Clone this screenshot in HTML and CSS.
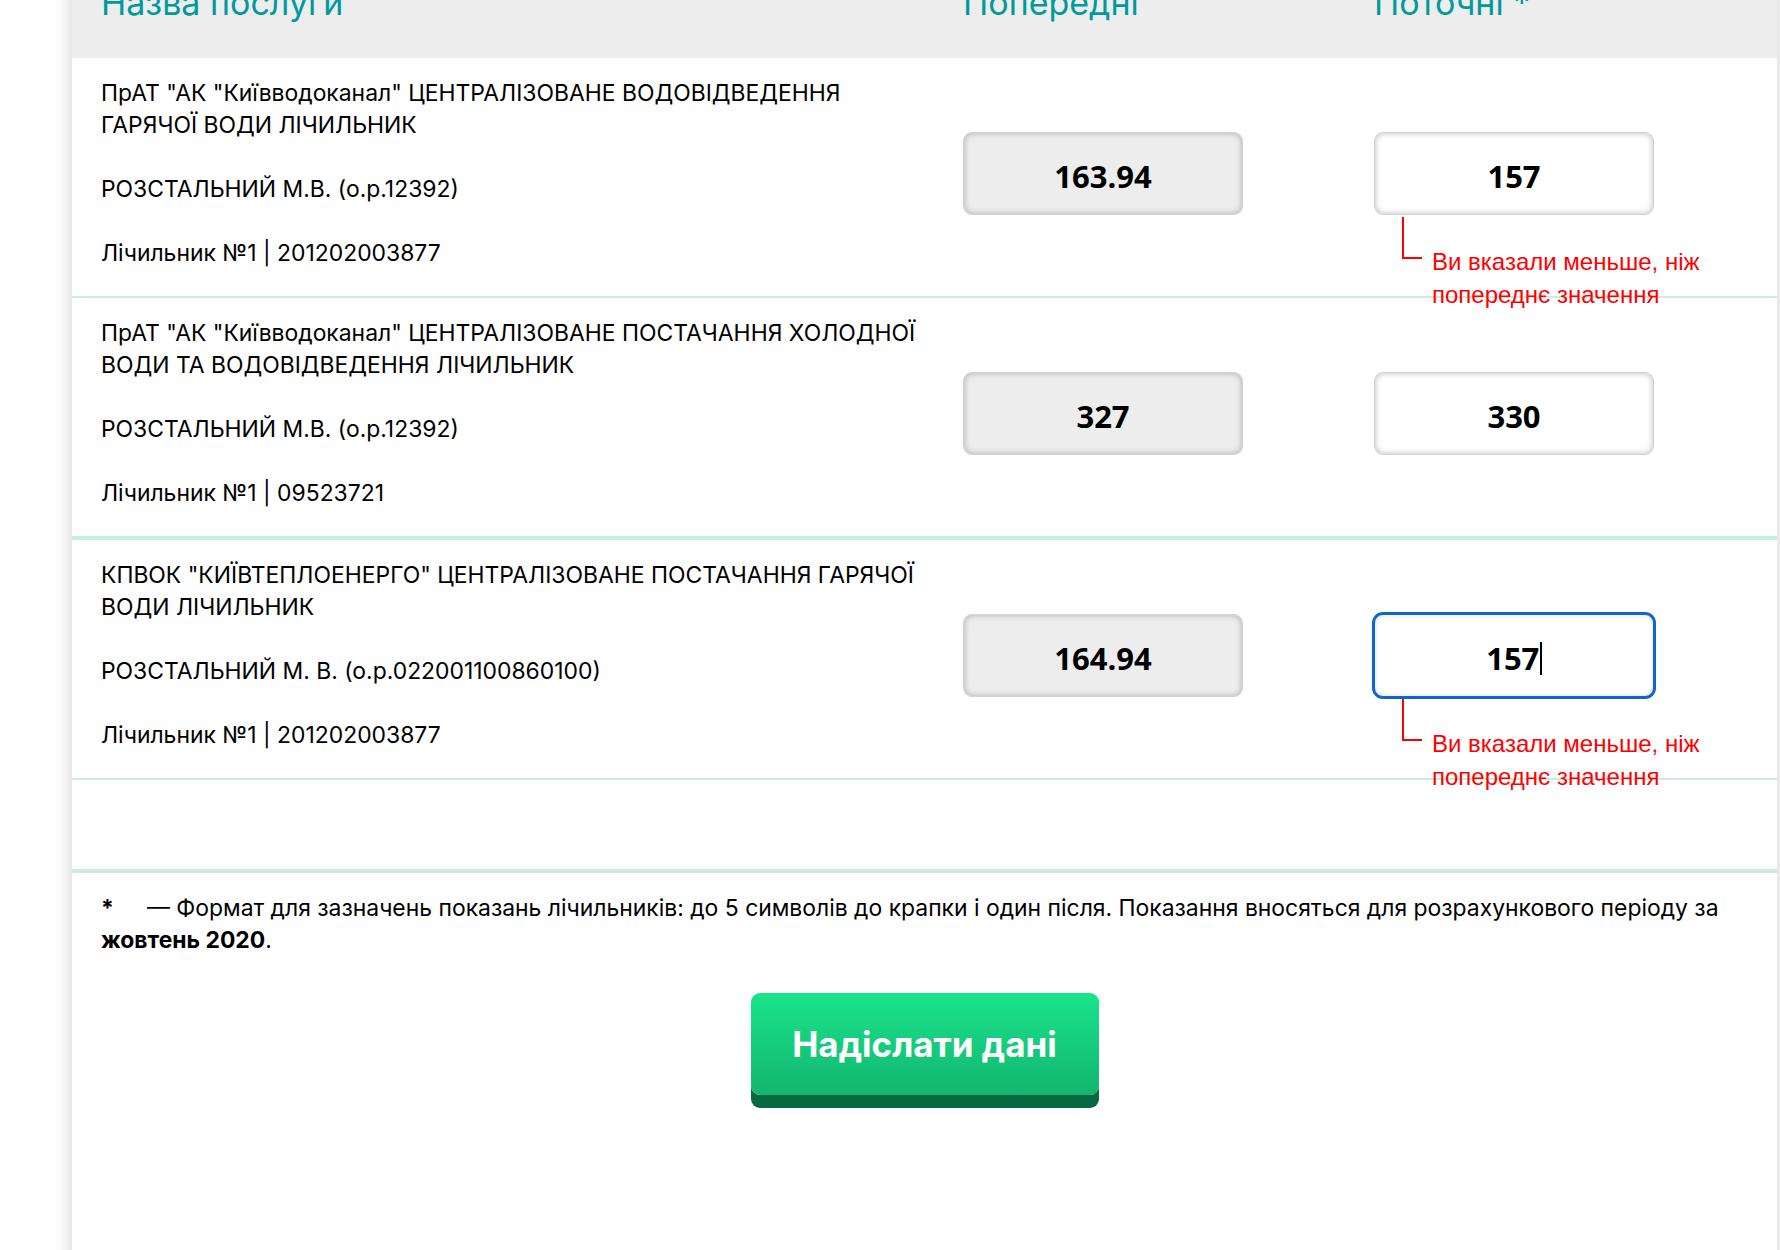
FILE: index.html
```html
<!DOCTYPE html>
<html lang="uk">
<head>
<meta charset="utf-8">
<title>Показання лічильників</title>
<link rel="stylesheet" href="styles.css">
</head>
<body>
<main class="card">
  <div class="table-head">
    <div class="th">Назва послуги</div>
    <div class="th">Попередні</div>
    <div class="th">Поточні *</div>
  </div>

  <div class="row">
    <div class="info">
      <p>ПрАТ "АК "Київводоканал" ЦЕНТРАЛІЗОВАНЕ ВОДОВІДВЕДЕННЯ ГАРЯЧОЇ ВОДИ ЛІЧИЛЬНИК</p>
      <p>РОЗСТАЛЬНИЙ М.В. (о.р.12392)</p>
      <p>Лічильник №1 | 201202003877</p>
    </div>
    <div class="cell"><div class="field field-prev">163.94</div></div>
    <div class="cell">
      <div class="field-wrap">
        <div class="field">157</div>
        <div class="error"><span class="error-line"></span><span class="error-text">Ви вказали меньше, ніж попереднє значення</span></div>
      </div>
    </div>
  </div>

  <div class="row row-thick">
    <div class="info">
      <p>ПрАТ "АК "Київводоканал" ЦЕНТРАЛІЗОВАНЕ ПОСТАЧАННЯ ХОЛОДНОЇ ВОДИ ТА ВОДОВІДВЕДЕННЯ ЛІЧИЛЬНИК</p>
      <p>РОЗСТАЛЬНИЙ М.В. (о.р.12392)</p>
      <p>Лічильник №1 | 09523721</p>
    </div>
    <div class="cell"><div class="field field-prev">327</div></div>
    <div class="cell"><div class="field-wrap"><div class="field">330</div></div></div>
  </div>

  <div class="row">
    <div class="info">
      <p>КПВОК "КИЇВТЕПЛОЕНЕРГО" ЦЕНТРАЛІЗОВАНЕ ПОСТАЧАННЯ ГАРЯЧОЇ ВОДИ ЛІЧИЛЬНИК</p>
      <p>РОЗСТАЛЬНИЙ М. В. (о.р.022001100860100)</p>
      <p>Лічильник №1 | 201202003877</p>
    </div>
    <div class="cell"><div class="field field-prev">164.94</div></div>
    <div class="cell">
      <div class="field-wrap">
        <div class="field field-focus">157<span class="caret"></span></div>
        <div class="error"><span class="error-line"></span><span class="error-text">Ви вказали меньше, ніж попереднє значення</span></div>
      </div>
    </div>
  </div>

  <div class="spacer"></div>

  <div class="note">
    <p><span class="note-star">*</span>— Формат для зазначень показань лічильників: до 5 символів до крапки і один після. Показання вносяться для розрахункового періоду за <b>жовтень 2020</b>.</p>
  </div>

  <div class="actions">
    <button class="submit" type="button">Надіслати дані</button>
  </div>
</main>
</body>
</html>
```
FILE: styles.css
```css
html, body {
  margin: 0;
  padding: 0;
  background: #ffffff;
  overflow: hidden;
}

body {
  font-family: Inter, "Open Sans", "Noto Sans", sans-serif;
  color: #000;
}

.card {
  margin: -30px 0 0 72px;
  width: 1705px;
  min-height: 1320px;
  background: #fff;
  box-shadow: 0 0 18px rgba(0, 0, 0, 0.2);
}

.table-head,
.row {
  display: grid;
  grid-template-columns: 862px 411px 280px;
  padding-left: 29px;
}

.table-head {
  background: #ededed;
  height: 88px;
  box-sizing: border-box;
  padding-top: 13px;
}

.th {
  font-size: 34px;
  line-height: 40px;
  color: #009a9c;
  white-space: nowrap;
}

.row {
  padding-top: 19px;
  padding-bottom: 27px;
  border-bottom: 2px solid #c9eee1;
  align-items: center;
}

.row-thick {
  border-bottom-width: 4px;
  padding-bottom: 27px;
}

.info {
  padding-right: 30px;
  font-size: 22.9px;
  line-height: 32px;
}

.info p {
  margin: 0 0 32px;
}

.info p:last-child {
  margin-bottom: 0;
}

.cell {
  display: flex;
  align-items: center;
}

.field-wrap {
  position: relative;
}

.field {
  width: 280px;
  height: 83px;
  box-sizing: border-box;
  padding-top: 6px;
  border: 1px solid #d2d2d2;
  border-radius: 9px;
  background: #fff;
  box-shadow: inset 0 0 6px rgba(0, 0, 0, 0.28);
  display: flex;
  align-items: center;
  justify-content: center;
  font-family: "Open Sans", "Noto Sans", sans-serif;
  font-weight: 700;
  font-size: 31px;
  color: #000;
}

.field-prev {
  background: #ededed;
}

.field-focus {
  border-color: #0c66cc;
  box-shadow: 0 0 0 2px #0c66cc, inset 0 0 4px rgba(0, 0, 0, 0.15);
}

.caret {
  display: inline-block;
  width: 1.5px;
  height: 33px;
  background: #000;
  margin-left: 1px;
}

.error {
  position: absolute;
  left: 28px;
  top: 100%;
  width: 320px;
  display: flex;
  align-items: flex-start;
  z-index: 2;
}

.error-line {
  flex: none;
  width: 18px;
  height: 40px;
  margin-top: 2px;
  border-left: 2px solid #ff0000;
  border-bottom: 2px solid #ff0000;
}

.error-text {
  margin: 30px 0 0 10px;
  font-family: "Liberation Sans", Arial, sans-serif;
  font-size: 24px;
  line-height: 33px;
  color: #ff0000;
  width: 290px;
}

.spacer {
  height: 89px;
  border-bottom: 4px solid #c9eee1;
}

.note {
  padding: 19px 29px 0;
  font-size: 22.9px;
  line-height: 32px;
}

.note p {
  margin: 0;
}

.note-star {
  display: inline-block;
  width: 46px;
  font-weight: 700;
}

.actions {
  display: flex;
  justify-content: center;
  padding-top: 37px;
}

.submit {
  width: 348px;
  height: 102px;
  border: 0;
  border-radius: 9px;
  background: linear-gradient(#1ae48b, #12b56f);
  box-shadow: 0 13px 0 #07693f;
  color: #fff;
  font-family: Inter, "Open Sans", sans-serif;
  font-weight: 700;
  font-size: 35px;
  cursor: pointer;
}
```
